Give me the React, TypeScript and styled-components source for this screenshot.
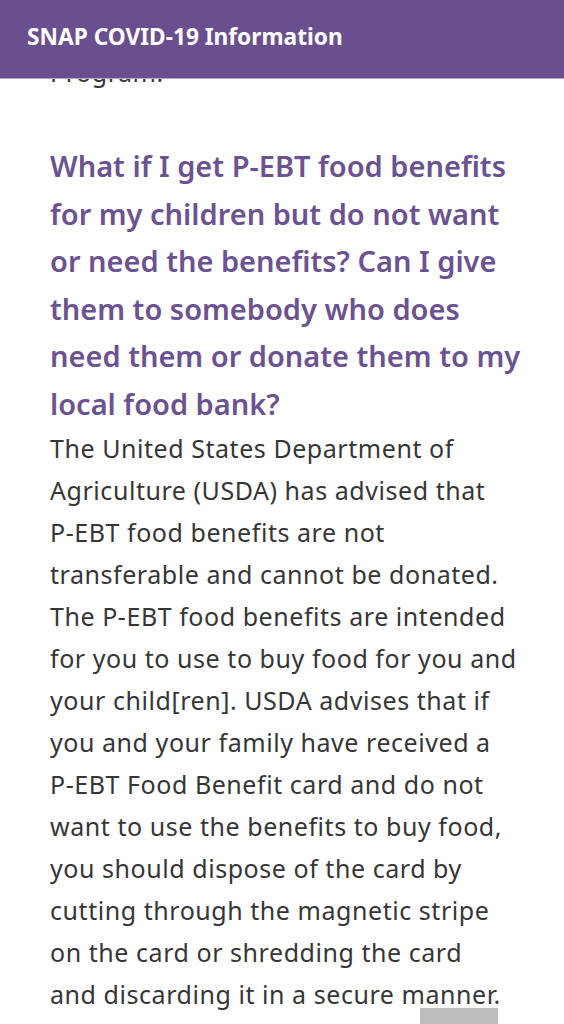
import React from "react";
import styled, { createGlobalStyle } from "styled-components";

const GlobalStyle = createGlobalStyle`
  html, body {
    margin: 0;
    padding: 0;
    background: #ffffff;
  }
  body {
    font-family: "Noto Sans", "Open Sans", sans-serif;
    -webkit-font-smoothing: antialiased;
  }
`;

const Header = styled.header`
  position: fixed;
  top: 0;
  left: 0;
  right: 0;
  z-index: 10;
  height: 79px;
  box-sizing: border-box;
  padding: 21px 0 0 27px;
  background: #6a4f8e;
  border-bottom: 1px solid #b7a3cf;
`;

const Title = styled.h1`
  margin: 0;
  font-family: "Noto Sans", "Open Sans", sans-serif;
  font-weight: 700;
  font-size: 22.7px;
  line-height: 32px;
  color: #ffffff;
  letter-spacing: 0;
`;

const Main = styled.main`
  padding: 51px 10px 0 50px;
`;

const Paragraph = styled.p`
  margin: 0;
  font-size: 25px;
  line-height: 42px;
  letter-spacing: 0.55px;
  color: #363636;
  white-space: nowrap;
`;

const Question = styled.h2`
  margin: 49px 0 0;
  font-weight: 600;
  font-size: 29px;
  line-height: 47.5px;
  color: #6b5291;
  letter-spacing: 0;
  white-space: nowrap;
`;

const ScrollThumb = styled.div`
  position: fixed;
  left: 420px;
  bottom: 0;
  width: 78px;
  height: 16px;
  background: #bdbdbd;
`;

const questionLines = [
  "What if I get P-EBT food benefits",
  "for my children but do not want",
  "or need the benefits? Can I give",
  "them to somebody who does",
  "need them or donate them to my",
  "local food bank?",
];

const answerLines = [
  "The United States Department of",
  "Agriculture (USDA) has advised that",
  "P-EBT food benefits are not",
  "transferable and cannot be donated.",
  "The P-EBT food benefits are intended",
  "for you to use to buy food for you and",
  "your child[ren]. USDA advises that if",
  "you and your family have received a",
  "P-EBT Food Benefit card and do not",
  "want to use the benefits to buy food,",
  "you should dispose of the card by",
  "cutting through the magnetic stripe",
  "on the card or shredding the card",
  "and discarding it in a secure manner.",
];

function Lines({ lines }: { lines: string[] }) {
  return (
    <>
      {lines.map((l, i) => (
        <React.Fragment key={i}>
          {l}
          {i < lines.length - 1 && <br />}
        </React.Fragment>
      ))}
    </>
  );
}

export default function App() {
  return (
    <>
      <GlobalStyle />
      <Header>
        <Title>SNAP COVID-19 Information</Title>
      </Header>
      <Main>
        <Paragraph>Program.</Paragraph>
        <Question>
          <Lines lines={questionLines} />
        </Question>
        <Paragraph>
          <Lines lines={answerLines} />
        </Paragraph>
      </Main>
      <ScrollThumb />
    </>
  );
}
